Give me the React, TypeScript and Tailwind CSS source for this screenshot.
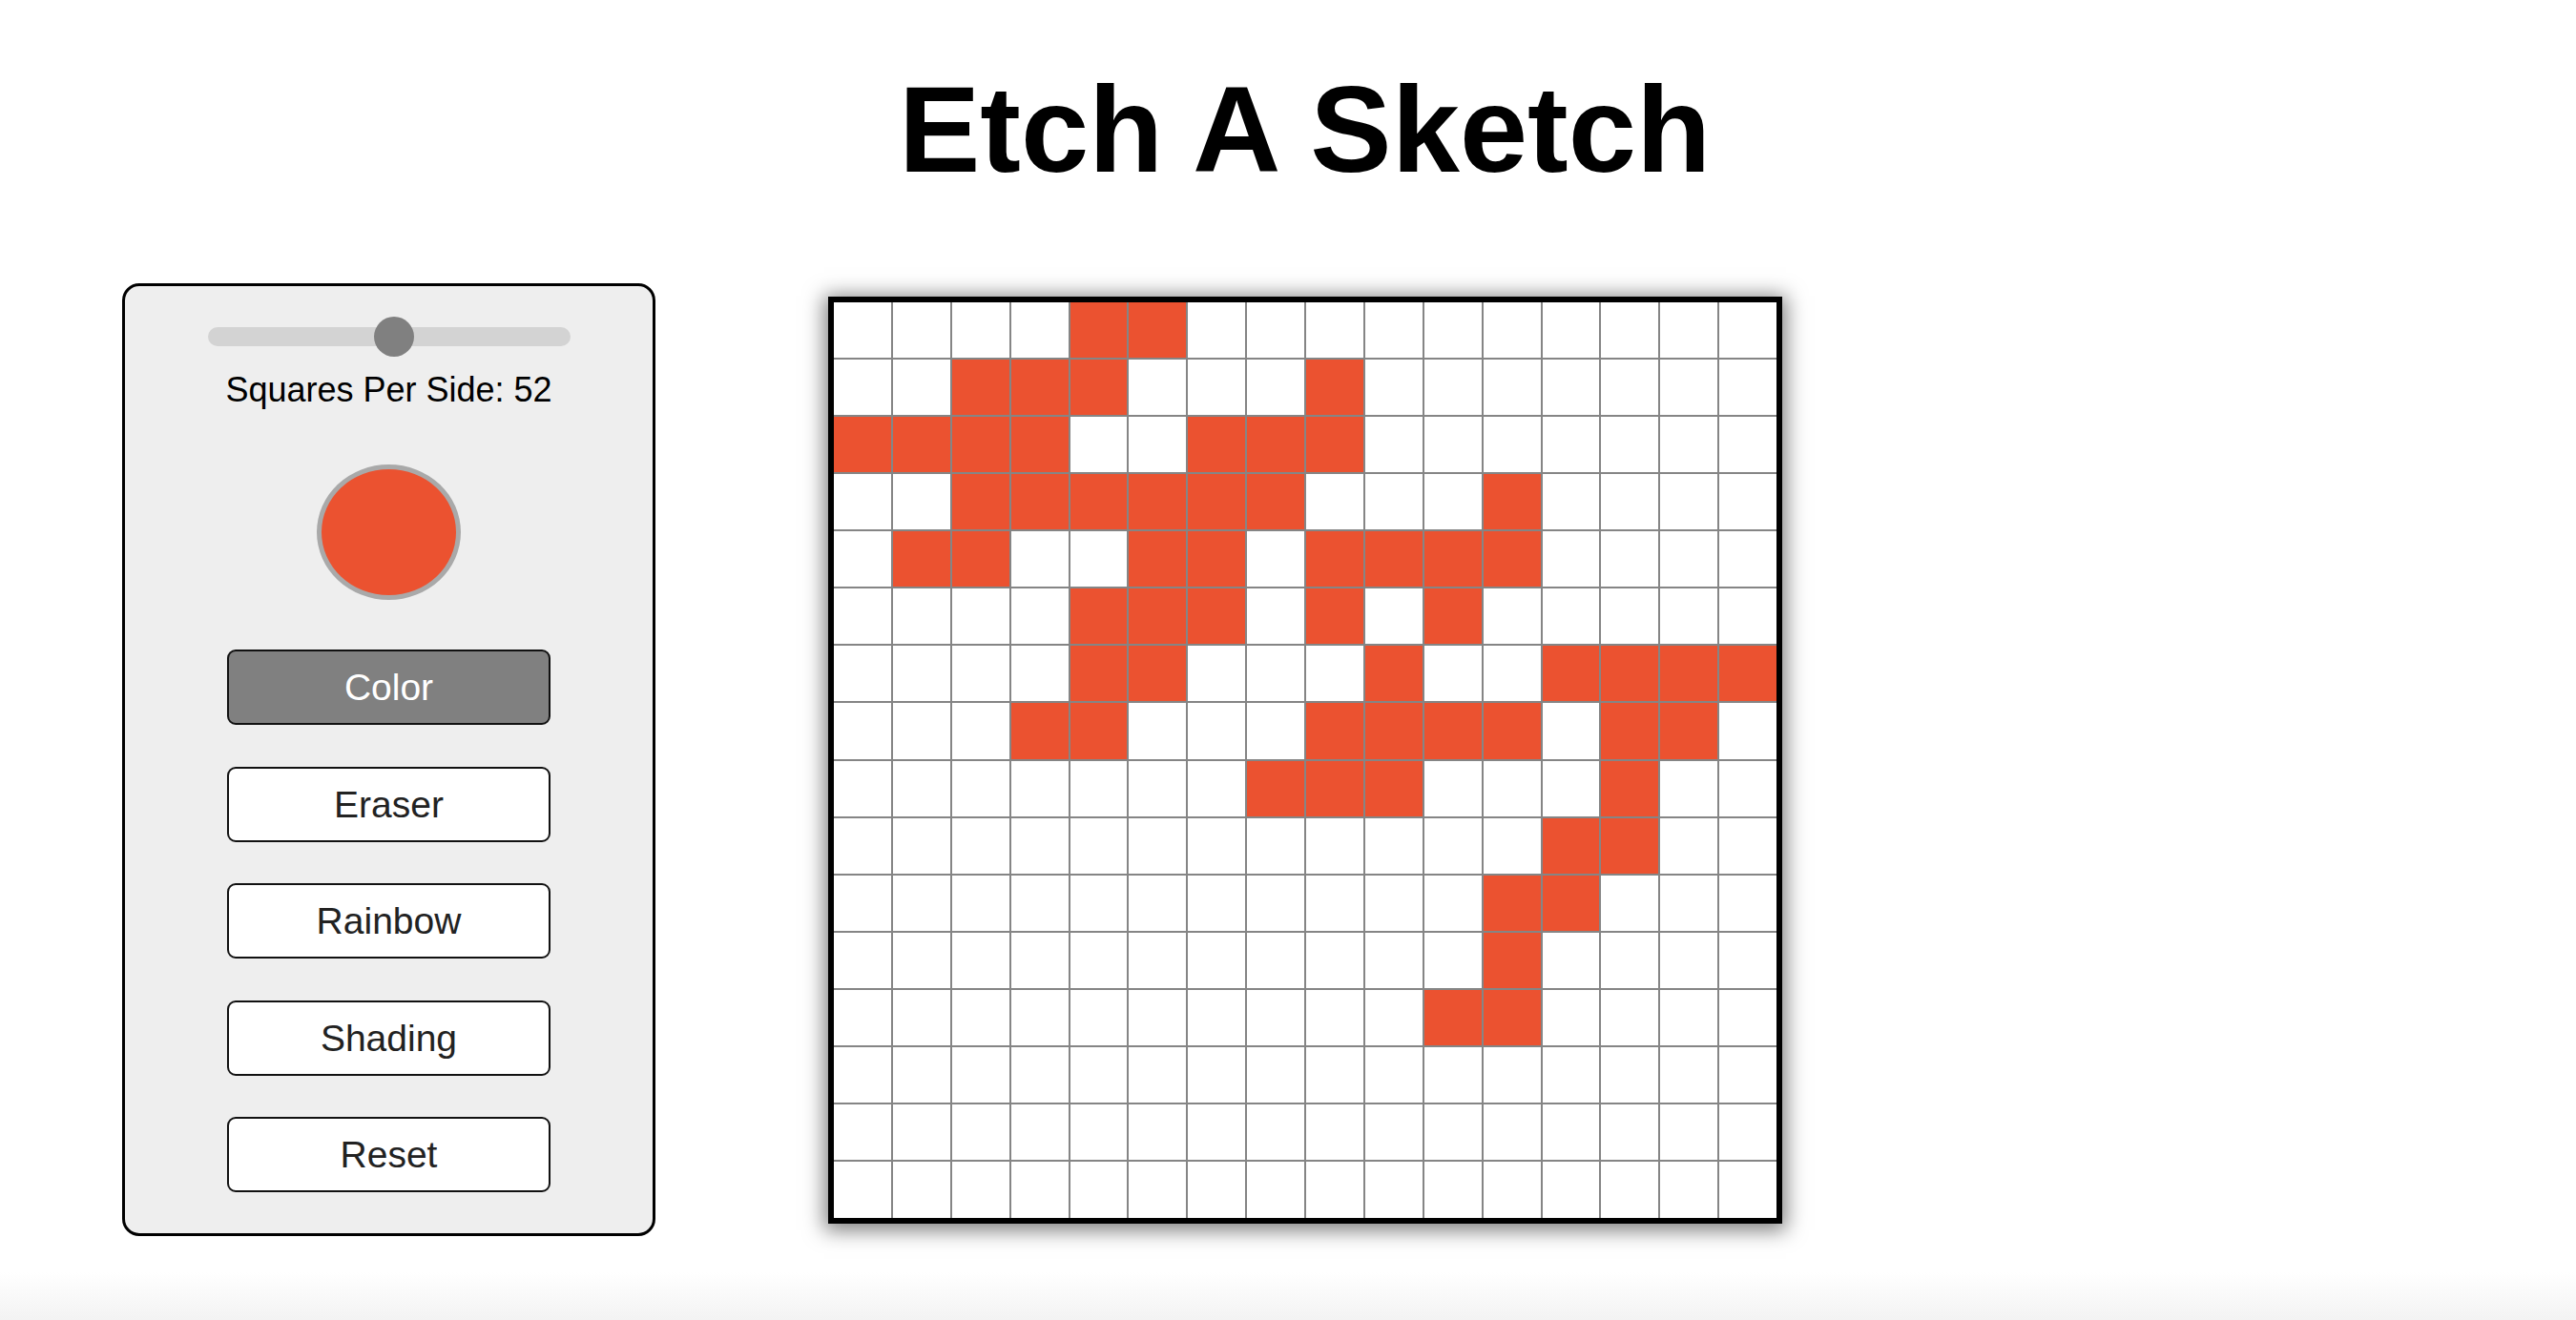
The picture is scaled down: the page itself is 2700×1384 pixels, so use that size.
import { useState } from 'react';

const SIDE = 16;

// painted cells, row by row (column indexes)
const PAINTED: number[][] = [
  [4, 5],
  [2, 3, 4, 8],
  [0, 1, 2, 3, 6, 7, 8],
  [2, 3, 4, 5, 6, 7, 11],
  [1, 2, 5, 6, 8, 9, 10, 11],
  [4, 5, 6, 8, 10],
  [4, 5, 9, 12, 13, 14, 15],
  [3, 4, 8, 9, 10, 11, 13, 14],
  [7, 8, 9, 13],
  [12, 13],
  [11, 12],
  [11],
  [10, 11],
  [],
  [],
  [],
];

const MODES = ['Color', 'Eraser', 'Rainbow', 'Shading', 'Reset'];

function ControlPanel({ mode, onMode }: { mode: string; onMode: (m: string) => void }) {
  return (
    <div className="w-[559px] h-[999px] shrink-0 border-[3px] border-black rounded-[18px] bg-[#eeeeee] flex flex-col items-center pt-[32px]">
      {/* size slider */}
      <div className="relative w-[380px] h-[42px] flex items-center">
        <div className="w-full h-[20px] rounded-full bg-[#d3d3d3]" />
        <div className="absolute left-[174px] top-0 w-[42px] h-[42px] rounded-full bg-[#808080]" />
      </div>
      <div className="mt-[17px] text-[36px] leading-none text-black">Squares Per Side: 52</div>

      {/* colour picker */}
      <div className="mt-[60px] w-[151px] h-[142px] rounded-[50%] border-[5px] border-[#a9a9a9] bg-[#eb5230]" />

      <div className="mt-[52px] flex flex-col gap-[43.5px]">
        {MODES.map((m) => (
          <button
            key={m}
            onClick={() => onMode(m)}
            className={
              m === mode
                ? 'w-[339px] h-[79px] rounded-[9px] border-2 border-[#111] bg-[#808080] text-white text-[39px] leading-none flex items-center justify-center'
                : 'w-[339px] h-[79px] rounded-[9px] border-2 border-[#111] bg-white text-[#222] text-[39px] leading-none flex items-center justify-center'
            }
          >
            {m}
          </button>
        ))}
      </div>
    </div>
  );
}

function SketchGrid() {
  return (
    <div className="w-[1000px] h-[972px] shrink-0 border-[6px] border-black bg-[#858585] shadow-[0_3px_20px_4px_rgba(0,0,0,0.5)] grid grid-cols-16 grid-rows-16 gap-[2px]">
      {Array.from({ length: SIDE * SIDE }).map((_, i) => {
        const r = Math.floor(i / SIDE);
        const c = i % SIDE;
        const on = PAINTED[r].includes(c);
        return <div key={i} className={on ? 'bg-[#eb5230]' : 'bg-white'} />;
      })}
    </div>
  );
}

export default function App() {
  const [mode, setMode] = useState('Color');

  return (
    <div className="w-full min-h-screen bg-white flex flex-col font-['Liberation_Sans',Arial,sans-serif]">
      <h1 className="mt-[72px] pl-[35px] text-center text-[128px] leading-none font-bold text-black">Etch A Sketch</h1>

      <main className="mt-[97px] pl-[128px] flex items-center gap-[181px]">
        <ControlPanel mode={mode} onMode={setMode} />
        <SketchGrid />
      </main>

      {/* faint bottom fade */}
      <div className="mt-auto h-[50px] bg-gradient-to-b from-white to-[#f3f3f3]" />
    </div>
  );
}
